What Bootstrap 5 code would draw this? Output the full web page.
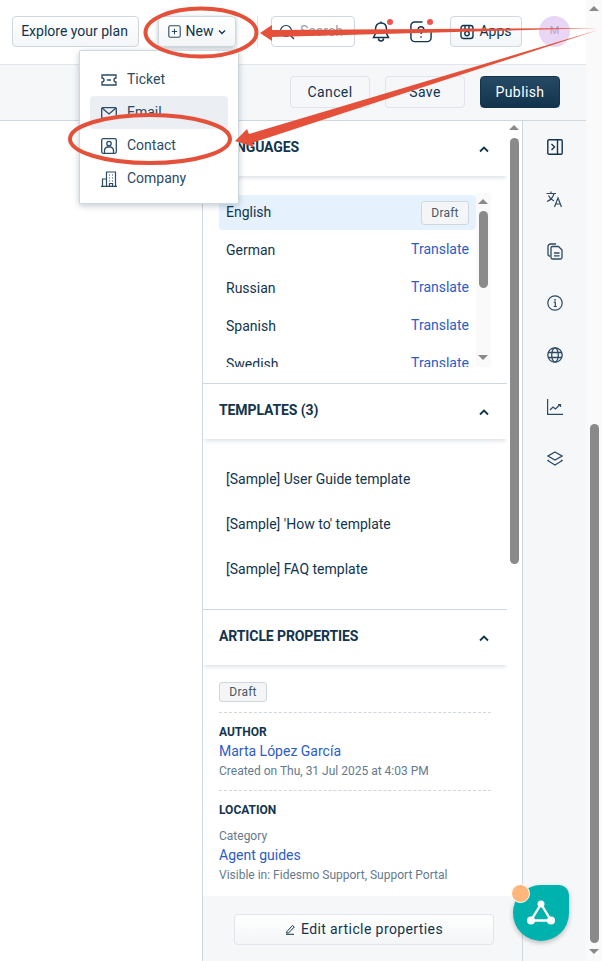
<!doctype html>
<html lang="en">
<head>
<meta charset="utf-8">
<title>Article editor</title>
<link href="https://cdn.jsdelivr.net/npm/bootstrap@5.3.0/dist/css/bootstrap.min.css" rel="stylesheet">
<style>
html,body{height:961px;overflow:hidden;background:#fff}
body{font-family:Roboto,"Liberation Sans",sans-serif;font-size:14px;color:#2c3e50;position:relative}
a{text-decoration:none;color:#2c5cc5}
.shell{width:602px;height:961px;display:flex}
.page-col{width:586px;display:flex;flex-direction:column;flex:none}
.page-scroll{width:16px;background:#fafafa;position:relative;flex:none}
.topbar{height:65px;flex:none;border-bottom:1px solid #dfe5ea;padding:16px 16px 0 12px;display:flex;align-items:flex-start;background:#fff}
.fbtn{height:31px;border:1px solid #cfd7df;border-radius:4px;background:linear-gradient(#fff,#f3f5f7);display:inline-flex;align-items:center;justify-content:center;color:#12344d;font-size:14px;padding:0;white-space:nowrap}
.b-explore{width:127px;padding-right:2px}
.b-new{width:78px;margin-left:19px;box-shadow:0 1px 4px rgba(18,52,77,.3);gap:5px}
.vsep{width:1px;height:31px;background:#dfe5ea;margin:0 13px 0 21px}
.b-search{width:84px;color:#92a2b1;gap:5px;justify-content:flex-start;padding-left:7px;background:#fff}
.b-apps{width:72px;gap:5px}
.tbicon{position:relative;display:flex;width:24px;height:31px;align-items:center;justify-content:center}
.t-bell{margin-left:14px}
.t-help{margin-left:16px;margin-right:17px}
.rdot{position:absolute;width:6px;height:6px;border-radius:50%;background:#f4524d;top:3px;right:0}
.avatar{width:31px;height:31px;border-radius:50%;background:#e9d6f5;color:#b9a2c9;font-size:11px;display:flex;align-items:center;justify-content:center;margin-left:17px}
.subbar{height:56px;flex:none;background:#f5f7f9;border-bottom:1px solid #cfd7df;display:flex;justify-content:flex-end;align-items:flex-start;padding:11px 26px 0 0;gap:15px}
.b-sub{height:32px;width:80px;background:#f5f7f9;border-color:#dfe5ea;letter-spacing:.4px}
.b-pub{background:linear-gradient(#264966,#12344d);border-color:#12344d;color:#fff}
.workarea{flex:1;display:flex;min-height:0}
.canvas{width:202px;flex:none;background:#fff}
.sidepanel{width:321px;flex:none;border-left:1px solid #cfd7df;border-right:1px solid #cfd7df;background:#fff;display:flex;flex-direction:column;min-height:0}
.panelscroll{flex:1;display:flex;min-height:0;overflow:hidden}
.panelbody{width:304px;flex:none}
.pscroll{width:15px;flex:none;background:#fff;position:relative}
.sechead{height:55px;padding:0 17px 0 16px;display:flex;align-items:center;justify-content:space-between;font-weight:700;font-size:14px;color:#12344d;box-shadow:0 3px 4px -1px rgba(18,52,77,.14);background:#fff;letter-spacing:-.1px}
.sechead span{padding-bottom:2px}
.sechead svg{margin-right:1px;margin-top:2px}
.langwrap{margin:17px 16px 0 16px;height:174px;display:flex;position:relative;justify-content:space-between}
.langlist{width:257px;padding-top:2px;height:174px;overflow:hidden}
.lrow{height:35px;margin-bottom:3px;border-radius:4px;padding:0 7px;display:flex;align-items:center;justify-content:space-between;color:#12344d}
.lrow a{margin-top:-3px}
.lactive{background:#e5f2fd}
.lname{margin-top:-1px}
.tag{border:1px solid #cfd7df;background:#f3f5f7;border-radius:3px;font-size:12px;color:#475867;display:inline-flex;align-items:center;justify-content:center;letter-spacing:.2px}
.tag-lang{width:48px;height:24px}
.tag-art{width:48px;height:20px}
.lscroll{width:15px;background:#fafafa;position:relative}
.sectionline{border-top:1px solid #cfd7df;margin-top:16px}
.line-flush{margin-top:0}
.tplbody{height:170px;padding:18px 23px 0;color:#12344d}
.tplrow{height:45px;display:flex;align-items:center}
.propbody{padding:16px 16px 0;height:240px;overflow:hidden}
.dash{border-top:1px dashed #cfd7df}
.d1{margin-top:10px}
.d2{margin-top:12px}
.proptitle{font-size:12px;font-weight:700;color:#12344d;line-height:14px;margin-top:12px}
.proplink{line-height:20px;margin-top:2px;display:block}
.propmuted{font-size:12px;color:#647a8e;line-height:14px}
.m-cat{margin-top:12px}
.m-vis{margin-top:3px}
.panelfoot{height:65px;flex:none;background:#f5f7f9;padding:18px 0 0 31px}
.b-edit{width:260px;height:31px;border-color:#dfe5ea;gap:5px;letter-spacing:.4px}
.rail{flex:1;background:#f5f7f9;display:flex;flex-direction:column;align-items:center}
.railicon{height:52px;display:flex;align-items:center;justify-content:center;width:100%}
.thumb{position:absolute;background:#8a8a8a;border-radius:5px;width:9px}
.arr{position:absolute;width:0;height:0;border-left:5px solid transparent;border-right:5px solid transparent}
.arr-up{border-bottom:5px solid #8a8a8a}
.arr-down{border-top:5px solid #8a8a8a}
.menu-pop{position:absolute;left:79px;top:50px;width:160px;height:154px;background:#fff;border:1px solid #cfd7df;border-radius:2px;box-shadow:0 2px 6px rgba(18,52,77,.25);padding:12px 10px;z-index:5}
.mrow{height:33px;display:flex;align-items:center;padding-left:11px;gap:10px;color:#2c4a63;border-radius:4px}
.mhover{background:#ebeff3}
.fab{position:absolute;left:513px;top:885px;width:56px;height:56px;background:#00b2ae;border-radius:50% 10px 50% 50%;box-shadow:0 2px 5px rgba(0,0,0,.25);display:flex;align-items:center;justify-content:center;z-index:6}
.fabdot{position:absolute;left:511px;top:884px;width:19px;height:19px;border-radius:50%;background:#ffb67a;border:1px solid #fff;z-index:7}
.overlay{position:absolute;left:0;top:0;z-index:8;pointer-events:none}
</style>
</head>
<body>
<div class="shell">
  <div class="page-col">
    <header class="topbar">
      <button class="fbtn b-explore">Explore your plan</button>
      <button class="fbtn b-new">
        <svg width="13" height="13" viewBox="0 0 13 13" fill="none" stroke="#2c4a63" stroke-width="1.1"><rect x=".8" y=".8" width="11.4" height="11.4" rx="1.5"/><path d="M6.5 3.8v5.4M3.8 6.5h5.4"/></svg>
        New
        <svg width="8" height="6" viewBox="0 0 8 6" fill="none" stroke="#12344d" stroke-width="1.3"><path d="M1 1.5l3 3 3-3"/></svg>
      </button>
      <span class="vsep"></span>
      <button class="fbtn b-search">
        <svg width="16" height="16" viewBox="0 0 16 16" fill="none" stroke="#12344d" stroke-width="1.2"><circle cx="7" cy="7" r="5.5"/><path d="M11 11l4 4"/></svg>
        Search
      </button>
      <span class="tbicon t-bell">
        <svg width="20" height="24" viewBox="0 0 20 24" fill="none" stroke="#12344d" stroke-width="1.5"><path d="M10 3c-3.600 0-5.500 2.700-5.500 6v4.500L2.500 17.500h15l-2-4V9c0-3.300-1.900-6-5.500-6zM10 1.500V3M7.500 18.500c0 3.300 5 3.300 5 0"/></svg>
        <span class="rdot"></span>
      </span>
      <span class="tbicon t-help">
        <svg width="25" height="24" viewBox="0 0 25 24" fill="none" stroke="#12344d" stroke-width="1.5"><path d="M14 1.500H6a4 4 0 0 0-4 4V18a4 4 0 0 0 4 4h13a4 4 0 0 0 4-4V12"/><path d="M9.500 9.500c0-4 6-4 6 0 0 2-3 2.200-3 4.500M12.500 16.500v1.500"/></svg>
        <span class="rdot"></span>
      </span>
      <button class="fbtn b-apps">
        <svg width="14" height="16" viewBox="0 0 14 16" fill="none" stroke="#12344d" stroke-width="1.4"><rect x="1" y="1.500" width="12" height="13" rx="2.500"/><circle cx="7" cy="9.500" r="2.200"/><path d="M1 5.500h12M5 1.500v4M9 1.500v4"/></svg>
        Apps
      </button>
      <span class="avatar">M</span>
    </header>
    <div class="subbar">
      <button class="fbtn b-sub">Cancel</button>
      <button class="fbtn b-sub">Save</button>
      <button class="fbtn b-sub b-pub">Publish</button>
    </div>
    <div class="workarea">
      <div class="canvas"></div>
      <aside class="sidepanel">
        <div class="panelscroll">
          <div class="panelbody">
            <div class="sechead"><span>LANGUAGES</span>
              <svg width="10" height="7" viewBox="0 0 10 7" fill="none" stroke="#12344d" stroke-width="1.800"><path d="M1 5.500l4-4 4 4"/></svg>
            </div>
            <div class="langwrap">
              <div class="langlist">
                <div class="lrow lactive"><span class="lname">English</span><span class="tag tag-lang">Draft</span></div>
                <div class="lrow"><span class="lname">German</span><a href="#">Translate</a></div>
                <div class="lrow"><span class="lname">Russian</span><a href="#">Translate</a></div>
                <div class="lrow"><span class="lname">Spanish</span><a href="#">Translate</a></div>
                <div class="lrow"><span class="lname">Swedish</span><a href="#">Translate</a></div>
              </div>
              <div class="lscroll">
                <span class="arr arr-up" style="left:2px;top:6px"></span>
                <span class="thumb" style="left:3px;top:18px;height:77px"></span>
                <span class="arr arr-down" style="left:2px;top:162px"></span>
              </div>
            </div>
            <div class="sectionline"></div>
            <div class="sechead"><span>TEMPLATES (3)</span>
              <svg width="10" height="7" viewBox="0 0 10 7" fill="none" stroke="#12344d" stroke-width="1.800"><path d="M1 5.500l4-4 4 4"/></svg>
            </div>
            <div class="tplbody">
              <div class="tplrow">[Sample] User Guide template</div>
              <div class="tplrow">[Sample] 'How to' template</div>
              <div class="tplrow">[Sample] FAQ template</div>
            </div>
            <div class="sectionline line-flush"></div>
            <div class="sechead"><span>ARTICLE PROPERTIES</span>
              <svg width="10" height="7" viewBox="0 0 10 7" fill="none" stroke="#12344d" stroke-width="1.800"><path d="M1 5.500l4-4 4 4"/></svg>
            </div>
            <div class="propbody">
              <span class="tag tag-art">Draft</span>
              <div class="dash d1"></div>
              <div class="proptitle">AUTHOR</div>
              <a class="proplink" href="#">Marta López García</a>
              <div class="propmuted m-vis">Created on Thu, 31 Jul 2025 at 4:03 PM</div>
              <div class="dash d2"></div>
              <div class="proptitle">LOCATION</div>
              <div class="propmuted m-cat">Category</div>
              <a class="proplink" href="#">Agent guides</a>
              <div class="propmuted m-vis">Visible in: Fidesmo Support, Support Portal</div>
            </div>
          </div>
          <div class="pscroll">
            <span class="arr arr-up" style="left:2px;top:4px"></span>
            <span class="thumb" style="left:3px;top:17px;height:426px"></span>
          </div>
        </div>
        <div class="panelfoot">
          <button class="fbtn b-edit">
            <svg width="11" height="11" viewBox="0 0 11 11" fill="none" stroke="#12344d" stroke-width="1"><path d="M2 7.500L7.500 1.500l1.800 1.500L3.500 9H1.500zM1 10.300h8"/></svg>
            Edit article properties
          </button>
        </div>
      </aside>
      <nav class="rail">
        <span class="railicon">
          <svg width="16" height="16" viewBox="0 0 16 16" fill="none" stroke="#12344d" stroke-width="1.400"><rect x=".8" y=".8" width="14.400" height="14.400" rx="1.200"/><path d="M10.500 1v14M4.500 5l3 3-3 3"/></svg>
        </span>
        <span class="railicon">
          <svg width="17" height="17" viewBox="0 0 17 17" fill="none" stroke="#2c4a63" stroke-width="1.200"><path d="M.5 2.500h9.500M5 .5v2M8 2.500c-.8 3.500-3.500 6.500-7 8M2.500 4.500c1 2.500 3 4.500 5.500 5.500M8.500 16l3.500-9 3.500 9M10 13h4"/></svg>
        </span>
        <span class="railicon">
          <svg width="16" height="17" viewBox="0 0 16 17" fill="none" stroke="#2c4a63" stroke-width="1.300"><path d="M3 13H2.500A1.500 1.500 0 0 1 1 11.500v-8A2.500 2.500 0 0 1 3.500 1H9"/><path d="M5.500 3.500h6L15 7v7.500a1.500 1.500 0 0 1-1.500 1.500h-8A1.500 1.500 0 0 1 4 14.500V5a1.500 1.500 0 0 1 1.500-1.500zM7 10h5.500M7 12.800h5.500"/></svg>
        </span>
        <span class="railicon">
          <svg width="16" height="16" viewBox="0 0 16 16" fill="none" stroke="#2c4a63" stroke-width="1.200"><circle cx="8" cy="8" r="7.200"/><path d="M6.800 7.200H8.300V11.500M6.800 11.500H9.800"/><circle cx="8" cy="4.800" r=".9" fill="#2c4a63" stroke="none"/></svg>
        </span>
        <span class="railicon">
          <svg width="16" height="16" viewBox="0 0 16 16" fill="none" stroke="#2c4a63" stroke-width="1.300"><circle cx="8" cy="8" r="7.200"/><ellipse cx="8" cy="8" rx="3.300" ry="7.200"/><path d="M1 5.500h14M1 10.500h14"/></svg>
        </span>
        <span class="railicon">
          <svg width="16" height="16" viewBox="0 0 16 16" fill="none" stroke="#2c4a63" stroke-width="1.200"><path d="M.6 0v15.400H16M3 11l3-3 2.500 2 4.500-4.500M11 5.500h2.500V8"/></svg>
        </span>
        <span class="railicon">
          <svg width="16" height="16" viewBox="0 0 16 16" fill="none" stroke="#2c4a63" stroke-width="1.300"><path d="M8 1l7 4-7 4-7-4zM2 9l-1 .7 7 4.300 7-4.300L14 9"/></svg>
        </span>
      </nav>
    </div>
  </div>
  <div class="page-scroll">
    <span class="arr arr-up" style="left:3px;top:6px"></span>
    <span class="thumb" style="left:4px;top:424px;height:519px"></span>
    <span class="arr arr-down" style="left:3px;top:949px"></span>
  </div>
</div>

<div class="menu-pop">
  <div class="mrow">
    <svg width="16" height="12" viewBox="0 0 16 12" fill="none" stroke="#2c4a63" stroke-width="1.300"><path d="M1 1h14v3a2 2 0 0 0 0 4v3H1V8a2 2 0 0 0 0-4zM6 6h4"/></svg>Ticket</div>
  <div class="mrow mhover">
    <svg width="16" height="12" viewBox="0 0 16 12" fill="none" stroke="#2c4a63" stroke-width="1.300"><rect x=".7" y=".7" width="14.600" height="10.600" rx="1"/><path d="M1 1l7 6 7-6"/></svg>Email</div>
  <div class="mrow">
    <svg width="16" height="16" viewBox="0 0 16 16" fill="none" stroke="#2c4a63" stroke-width="1.300"><rect x=".7" y=".7" width="14.600" height="14.600" rx="1.500"/><circle cx="8" cy="5.500" r="2.200"/><path d="M3.500 15v-2.500A3.500 3.500 0 0 1 7 9h2a3.500 3.500 0 0 1 3.500 3.500V15"/></svg>Contact</div>
  <div class="mrow">
    <svg width="16" height="16" viewBox="0 0 16 16" fill="none" stroke="#2c4a63" stroke-width="1.200"><path d="M0 15.400h16M1.500 15V8h4M5.500 15V1h9v14M8 4h1M11 4h1M8 7h1M11 7h1M8 10h1M11 10h1M8.500 15v-2.500h3V15"/></svg>Company</div>
</div>

<div class="fab">
  <svg width="30" height="28" viewBox="0 0 30 28" fill="none" stroke="#fff" stroke-width="2.400"><path d="M15 5L5 21.500h20z"/><circle cx="15" cy="5" r="3.500" fill="#fff" stroke="none"/><circle cx="5" cy="21.500" r="4" fill="#fff" stroke="none"/><circle cx="25" cy="21.500" r="4" fill="#fff" stroke="none"/></svg>
</div>
<span class="fabdot"></span>

<svg class="overlay" width="602" height="961" viewBox="0 0 602 961" fill="none">
  <ellipse cx="201" cy="32.500" rx="55.500" ry="24" stroke="#e5503a" stroke-width="4"/>
  <ellipse cx="150" cy="139" rx="80" ry="24" stroke="#e5503a" stroke-width="4"/>
  <polygon fill="#e5503a" points="260,33 272,25 272,30 598,28 272,37 272,41"/>
  <polygon fill="#e5503a" points="235,141 247,129 249,134 598,30 252,143 254,147"/>
</svg>
</body>
</html>
